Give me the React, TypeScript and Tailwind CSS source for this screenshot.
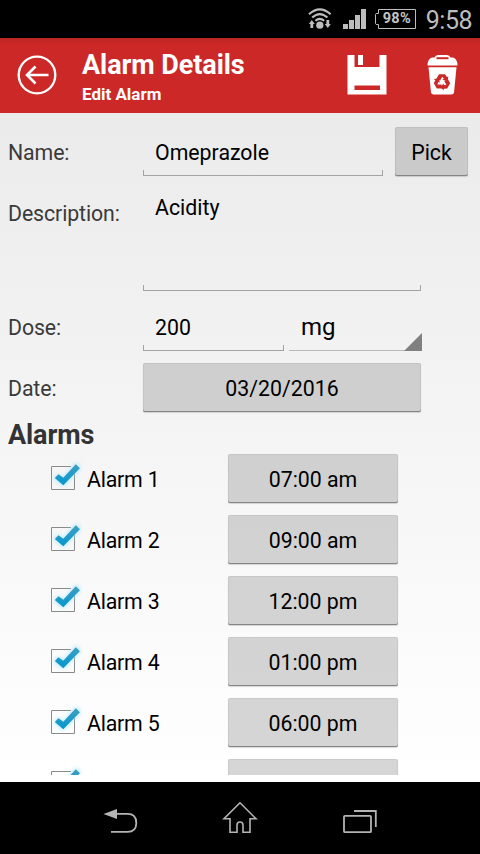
import { useState } from 'react'

interface Alarm {
  id: number
  time: string
  enabled: boolean
}

const INITIAL_ALARMS: Alarm[] = [
  { id: 1, time: '07:00 am', enabled: true },
  { id: 2, time: '09:00 am', enabled: true },
  { id: 3, time: '12:00 pm', enabled: true },
  { id: 4, time: '01:00 pm', enabled: true },
  { id: 5, time: '06:00 pm', enabled: true },
]

// One arrow of the recycle sign, centred on 0,0
const RECYCLE_ARROW = 'M-5.500 -3.600L-3 -7.700H3L4.900 -4.900L6.400 -5.600L5.400 -.7L.4 -2.300L1.900 -3.200L.2 -5.200L-1.900 -1.600z'

function StatusBar() {
  return (
    <div className="flex h-[38px] shrink-0 items-center justify-end bg-black pr-2">
      <svg width="24" height="22" viewBox="0 0 24 22" className="mr-[11px]" fill="none" stroke="#bdbdbd" strokeWidth="2.1">
        <path d="M1 6.200Q11.800 -3.600 22.600 6.200" />
        <path d="M4.200 9.600Q11.800 2.600 19.400 9.600" />
        <path d="M7.400 12.800Q11.800 8.800 16.200 12.800" />
        <circle cx="11.800" cy="17.200" r="3.600" fill="#bdbdbd" stroke="none" />
        <path d="M3.800 12l3 4H5.200v4H2.400v-4H.8zM19.800 20l-3-4h1.600v-4h2.800v4h1.600z" fill="#bdbdbd" stroke="none" />
      </svg>
      <svg width="24" height="22" viewBox="0 0 24 22" className="mr-[8px] mt-[2px]" fill="#bdbdbd">
        <path d="M0 15h5v5H0zM6 11h5v9H6zM12 6h5v14h-5zM18 0h5v20h-5z" />
      </svg>
      <div className="relative mr-[10px] flex h-[20px] w-[41px] items-center justify-center pl-[3px]">
        <svg width="41" height="20" viewBox="0 0 41 20" className="absolute inset-0" fill="none" stroke="#bdbdbd">
          <path d="M3.500 .5h37v19h-37v-4H1.200l-.7-1v-9l.7-1h2.300z" />
        </svg>
        <span className="pt-px text-[14.500px] font-bold leading-none tracking-[0.300px] text-[#c4c4c4]">98%</span>
      </div>
      <span className="pt-[2px] text-[25px] leading-none tracking-[-0.500px] text-[#bdbdbd]">9:58</span>
    </div>
  )
}

function Header() {
  return (
    <header className="flex h-[75px] shrink-0 items-center bg-[#cc2828] bg-[linear-gradient(#b92424,#cc2828_6px)] text-white">
      <button className="mb-px ml-[17px]" aria-label="Back">
        <svg width="40" height="40" viewBox="0 0 40 40" fill="none" stroke="#fff" strokeWidth="2.300">
          <circle cx="20" cy="20" r="18.300" />
          <path d="M31.500 20H10.500M18.500 11.500L10 20l8.500 8.500" strokeWidth="2.600" />
        </svg>
      </button>
      <div className="ml-[25px] flex-1">
        <h1 className="mt-[3px] text-[27px] font-bold leading-[32px] tracking-[-0.080px]">Alarm Details</h1>
        <p className="mt-[2px] text-[17px] font-bold leading-[22px]">Edit Alarm</p>
      </div>
      <button className="mb-px mr-[40px]" aria-label="Save">
        <svg width="40" height="40" viewBox="0 0 40 40">
          <path d="M.5 0H7.500v12h25V0H39.500v39.500H.5z" fill="#fff" />
          <path d="M11 0h5v10h-5z" fill="#fff" />
          <path d="M7.500 30.500h25.500v4.500H7.500z" fill="#cc2828" />
        </svg>
      </button>
      <button className="mb-px mr-[22px]" aria-label="Delete">
        <svg width="31" height="40" viewBox="0 0 31 40">
          <path d="M7.500 2.500Q8.500 0 11 0h9q2.500 0 3.500 2.500h2.500Q30.500 4 30.500 10.500H.5Q.5 4 5 2.500z" fill="#fff" />
          <path d="M9.500 2.200h12v2h-12z" fill="#cc2828" />
          <path d="M1.500 12.200h28L27 37.500q-.5 2-2.500 2h-18q-2 0-2.500-2z" fill="#fff" />
          <g fill="#cc2828" transform="translate(15 27)">
            <path d={RECYCLE_ARROW} />
            <path d={RECYCLE_ARROW} transform="rotate(120)" />
            <path d={RECYCLE_ARROW} transform="rotate(240)" />
          </g>
        </svg>
      </button>
    </header>
  )
}

function HoloButton({ className, children }: { className: string; children: React.ReactNode }) {
  return (
    <button
      className={`h-[49px] shrink-0 rounded-[2px] bg-[#999]/40 pt-[3px] text-[21.300px] text-black shadow-[inset_0_-1px_0_#858585,inset_0_0_0_1px_rgba(0,0,0,0.05),0_1px_1px_rgba(0,0,0,0.15)] ${className}`}
    >
      {children}
    </button>
  )
}

// Line with short upturned ends, drawn under an editable field
function Underline() {
  return <div className="h-[6px] border-x border-b border-[#a3a3a3]" />
}

function Label({ children }: { children: React.ReactNode }) {
  return (
    <label className="block w-[143px] shrink-0 pl-2 text-[21.300px] leading-[26px] tracking-[-0.100px] text-[#3a3a3a]">
      {children}
    </label>
  )
}

function CheckMark({ id }: { id: string }) {
  return (
    <svg width="36" height="36" viewBox="0 0 36 36">
      <defs>
        <linearGradient id={`tick-${id}`} x1="0" y1="0" x2="0" y2="1">
          <stop offset="0" stopColor="#3f9fc2" />
          <stop offset="1" stopColor="#0497cf" />
        </linearGradient>
        <filter id={`glow-${id}`} x="-40%" y="-40%" width="180%" height="180%">
          <feGaussianBlur stdDeviation="2" />
        </filter>
      </defs>
      <path d="M25 6.500H5.500v23h23V14" fill="none" stroke="#8a8a8a" />
      <path
        d="M9 18.300l3.300-3.500 5 4L30 4l4 3.700L17.300 25z"
        fill="#a4e6ff"
        stroke="#a4e6ff"
        strokeWidth="2"
        opacity="0.800"
        filter={`url(#glow-${id})`}
      />
      <path d="M8.800 18l3.700-3.800 4.800 3.600L29.800 4.300l4.100 3.900L17.300 25.300z" fill={`url(#tick-${id})`} />
    </svg>
  )
}

function AlarmRow({ alarm, onToggle }: { alarm: Alarm; onToggle: () => void }) {
  return (
    <div className="flex h-[61px] shrink-0 items-start">
      <button onClick={onToggle} className="ml-[46px] mt-[11px] h-9 w-9" aria-label={`Toggle alarm ${alarm.id}`}>
        {alarm.enabled ? (
          <CheckMark id={String(alarm.id)} />
        ) : (
          <span className="m-[5px] block h-6 w-6 border border-[#8a8a8a]" />
        )}
      </button>
      <span className="ml-[5px] mt-[18px] w-[141px] text-[21.300px] leading-[26px] tracking-[-0.200px] text-black">
        Alarm {alarm.id}
      </span>
      <HoloButton className="mt-[5px] w-[170px]">{alarm.time}</HoloButton>
    </div>
  )
}

function NavBar() {
  return (
    <nav className="flex h-[72px] shrink-0 items-start justify-center gap-[84px] bg-black pt-[19px]">
      <svg width="36" height="36" viewBox="0 0 36 36" fill="none" stroke="#b4b4b4" strokeWidth="1.800">
        <path d="M14 12.900h11.500q8.800 0 8.800 9t-8.800 9H9" />
        <path d="M1.500 13L15 8v10z" fill="#b4b4b4" stroke="none" />
      </svg>
      <svg width="36" height="36" viewBox="0 0 36 36" fill="none" stroke="#b4b4b4" strokeWidth="1.600">
        <path d="M18 1.800L2 17.800h6V31.200h7v-7q0-3.200 3-3.200t3 3.200v7h7V17.800h6z" />
      </svg>
      <svg width="36" height="36" viewBox="0 0 36 36" fill="none" stroke="#b4b4b4" strokeWidth="1.800">
        <rect x="2" y="14.800" width="27" height="16.400" rx="1" />
        <path d="M12 10h21.800v16" />
      </svg>
    </nav>
  )
}

export default function App() {
  const [name, setName] = useState('Omeprazole')
  const [description, setDescription] = useState('Acidity')
  const [dose, setDose] = useState('200')
  const [alarms, setAlarms] = useState<Alarm[]>(INITIAL_ALARMS)

  const toggleAlarm = (id: number) => {
    setAlarms(alarms.map((a) => (a.id === id ? { ...a, enabled: !a.enabled } : a)))
  }

  return (
    <div className="flex h-[854px] w-[480px] flex-col overflow-hidden font-['Roboto',sans-serif]">
      <StatusBar />
      <Header />

      <main className="h-[669px] shrink-0 bg-linear-to-b from-[#ebebeb] to-white pb-[7px] pt-[9px]">
        <div className="flex h-full flex-col overflow-hidden">
          <div className="flex h-[61px] shrink-0 items-center">
            <Label>Name:</Label>
            <div className="mb-[7px] mr-3 w-[240px]">
              <input
                value={name}
                onChange={(e) => setName(e.target.value)}
                className="block h-[48px] w-full px-3 pt-[12px] text-[21.300px] leading-[26px] text-black outline-none"
              />
              <Underline />
            </div>
            <HoloButton className="mb-[2px] w-[73px]">Pick</HoloButton>
          </div>

          <div className="flex h-[114px] shrink-0 items-start">
            <div className="mt-[18px] shrink-0">
              <Label>Description:</Label>
            </div>
            <div className="w-[278px]">
              <textarea
                value={description}
                onChange={(e) => setDescription(e.target.value)}
                className="block h-[102px] w-full resize-none px-3 pt-[12px] text-[21.300px] leading-[26px] text-black outline-none"
              />
              <Underline />
            </div>
          </div>

          <div className="flex h-[61px] shrink-0 items-center">
            <Label>Dose:</Label>
            <div className="mb-[7px] w-[141px]">
              <input
                value={dose}
                onChange={(e) => setDose(e.target.value)}
                className="block h-[48px] w-full px-3 pt-[12px] text-[21.300px] leading-[26px] text-black outline-none"
              />
              <Underline />
            </div>
            <button className="mb-[7px] ml-[5px] flex h-[54px] w-[133px] items-end justify-between border-b border-[#b9b9b9] pl-3">
              <span className="mb-[8px] text-[24px] leading-[30px] text-black">mg</span>
              <svg width="18" height="18" viewBox="0 0 18 18" className="-mb-px">
                <path d="M18 0v18H0z" fill="#808080" />
              </svg>
            </button>
          </div>

          <div className="flex h-[61px] shrink-0 items-center">
            <Label>Date:</Label>
            <HoloButton className="mb-[2px] w-[278px]">03/20/2016</HoloButton>
          </div>

          <h2 className="h-[30px] shrink-0 pl-2 text-[27px] font-bold leading-[32px] tracking-[-0.100px] text-[#333]">Alarms</h2>

          {alarms.map((alarm) => (
            <AlarmRow key={alarm.id} alarm={alarm} onToggle={() => toggleAlarm(alarm.id)} />
          ))}

          <div className="flex h-[61px] shrink-0 items-start">
            <div className="ml-[46px] mr-[146px] mt-[11px] h-9 w-9">
              <CheckMark id="next" />
            </div>
            <HoloButton className="mt-[5px] w-[170px]">{null}</HoloButton>
          </div>
        </div>
      </main>

      <NavBar />
    </div>
  )
}
